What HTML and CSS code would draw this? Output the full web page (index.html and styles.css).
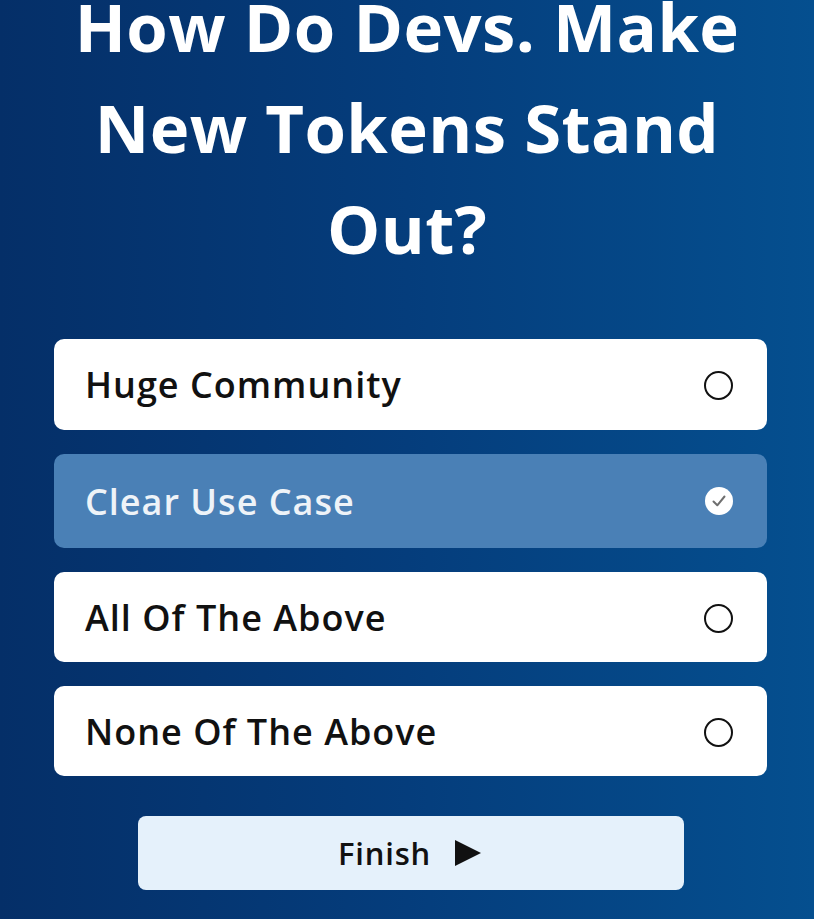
FILE: index.html
```html
<!DOCTYPE html>
<html lang="en">
<head>
<meta charset="utf-8">
<title>Quiz</title>
<link rel="stylesheet" href="styles.css">
</head>
<body>
<main class="screen">
  <h1 class="title">How Do Devs. Make<br>New Tokens Stand<br>Out?</h1>
  <ul class="options">
    <li class="option">
      <span class="label">Huge Community</span>
      <span class="radio"></span>
    </li>
    <li class="option selected">
      <span class="label">Clear Use Case</span>
      <span class="check">
        <svg viewBox="0 0 28 28" width="28" height="28"><circle cx="14" cy="14" r="14" fill="#ffffff"/><path d="M8.5 14.5 L12.3 18.3 L19.5 9.5" fill="none" stroke="#6f6f6f" stroke-width="2" stroke-linecap="round" stroke-linejoin="round"/></svg>
      </span>
    </li>
    <li class="option">
      <span class="label">All Of The Above</span>
      <span class="radio"></span>
    </li>
    <li class="option">
      <span class="label">None Of The Above</span>
      <span class="radio"></span>
    </li>
  </ul>
  <button class="finish" type="button">
    <span>Finish</span>
    <svg class="play" viewBox="0 0 30 28" width="30" height="28"><path d="M2 1 L28 14 L2 27 Z" fill="#111111"/></svg>
  </button>
</main>
</body>
</html>
```

FILE: styles.css
```css
html, body {
  margin: 0;
  padding: 0;
}

body {
  width: 814px;
  height: 919px;
  overflow: hidden;
  font-family: "Open Sans", "Noto Sans", sans-serif;
}

.screen {
  width: 814px;
  height: 919px;
  background: linear-gradient(90deg, #052f68 0%, #053d7c 50%, #054f8f 100%);
  display: flex;
  flex-direction: column;
  align-items: center;
  overflow: hidden;
}

.title {
  margin: -24px 0 0 0;
  color: #ffffff;
  font-weight: 700;
  font-size: 67px;
  line-height: 101px;
  text-align: center;
  letter-spacing: 0.4px;
}

.options {
  list-style: none;
  margin: 60px 0 0 7px;
  padding: 0;
  width: 713px;
  display: flex;
  flex-direction: column;
  gap: 24px;
}

.option {
  box-sizing: border-box;
  height: 91px;
  background: #ffffff;
  border-radius: 10px;
  display: flex;
  align-items: center;
  justify-content: space-between;
  padding: 0 34px 0 31px;
  color: #111111;
  font-size: 36px;
  font-weight: 600;
  letter-spacing: 1px;
}

.option.selected {
  height: 94px;
  background: #4a80b6;
  color: #eef3f8;
}

.option:nth-child(3),
.option:nth-child(4) {
  height: 90px;
}

.radio {
  box-sizing: border-box;
  width: 29px;
  height: 29px;
  border: 2px solid #111111;
  border-radius: 50%;
  margin-top: 2px;
}

.check {
  display: flex;
  width: 28px;
  height: 28px;
}

.finish {
  margin: 40px 0 0 7px;
  width: 546px;
  height: 74px;
  border: none;
  border-radius: 8px;
  background: #e5f1fb;
  display: flex;
  align-items: center;
  justify-content: center;
  gap: 22px;
  font-family: "Open Sans", "Noto Sans", sans-serif;
  font-size: 31px;
  font-weight: 600;
  letter-spacing: 0.8px;
  color: #111111;
  padding: 0;
}

.play {
  display: block;
}
```
